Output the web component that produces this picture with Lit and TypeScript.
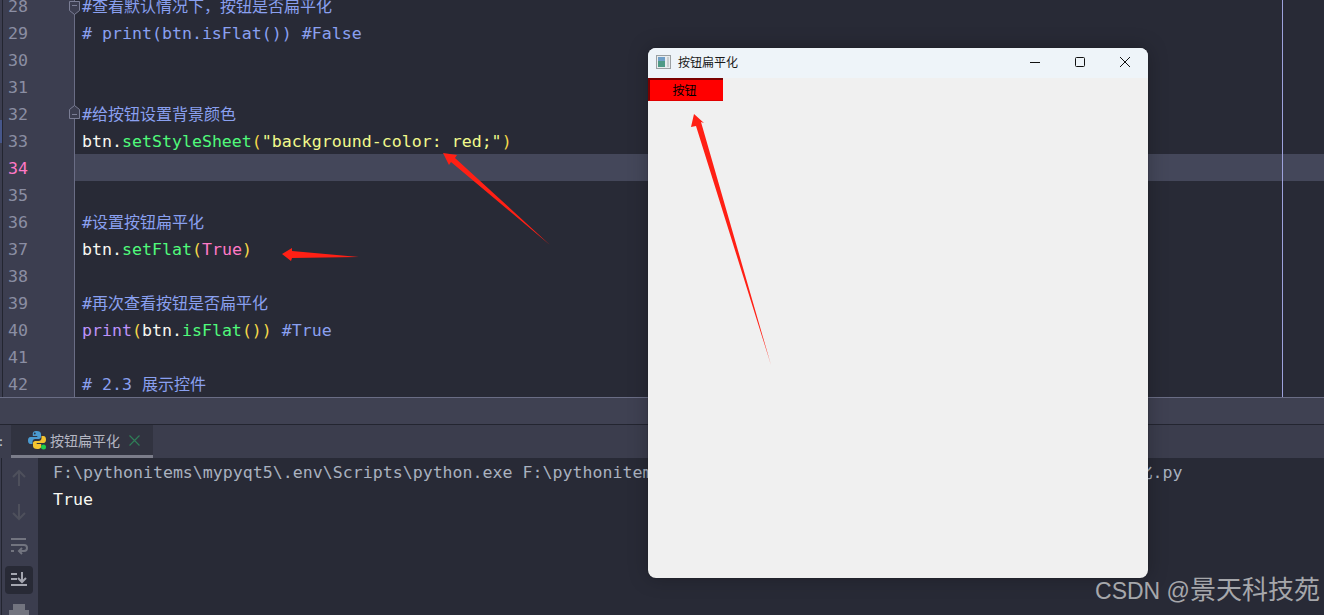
import { LitElement, html, css, svg } from "lit";
import { customElement } from "lit/decorators.js";

type Seg = [string, string];
const c = "cm", w = "wh", g = "gr", y = "ye", s = "st", p = "pk", v = "vi";
const lines: { n: number; segs: Seg[]; fold?: string }[] = [
  { n: 28, fold: "down", segs: [[c, "#"], ["cm cjk", "查看默认情况下，按钮是否扁平化"]] },
  { n: 29, segs: [[c, "# print(btn.isFlat()) #False"]] },
  { n: 30, segs: [] },
  { n: 31, segs: [] },
  { n: 32, fold: "up", segs: [[c, "#"], ["cm cjk", "给按钮设置背景颜色"]] },
  { n: 33, segs: [[w, "btn."], [g, "setStyleSheet"], [y, "("], [s, "\"background-color: red;\""], [y, ")"]] },
  { n: 34, segs: [] },
  { n: 35, segs: [] },
  { n: 36, segs: [[c, "#"], ["cm cjk", "设置按钮扁平化"]] },
  { n: 37, segs: [[w, "btn."], [g, "setFlat"], [y, "("], [p, "True"], [y, ")"]] },
  { n: 38, segs: [] },
  { n: 39, segs: [[c, "#"], ["cm cjk", "再次查看按钮是否扁平化"]] },
  { n: 40, segs: [[v, "print"], [y, "("], [w, "btn."], [g, "isFlat"], [y, "())"], [w, " "], [c, "#True"]] },
  { n: 41, segs: [] },
  { n: 42, segs: [[c, "# 2.3 "], ["cm cjk", "展示控件"]] },
];

@customElement("app-root")
export class AppRoot extends LitElement {
  static styles = css`
    :host { display: block; width: 1324px; height: 615px; position: relative; overflow: hidden; background: #282a36; font-family: "DejaVu Sans Mono", "Liberation Mono", "Noto Sans CJK SC", monospace; }
    .editor { height: 397px; overflow: hidden; display: flex; padding-left: 3px; box-sizing: border-box; background: linear-gradient(90deg, #3c3e50 2px, #232530 2px, #232530 3px, #282a36 3px); position: relative; }
    .stripe { position: absolute; left: 0; top: 120px; width: 2px; height: 23px; background: #46568a; }
    .gutter { width: 72px; flex: none; background: #3c3e50; border-right: 1px solid #6a6d85; box-sizing: border-box; position: relative; z-index: 1; }
    .rows { margin-top: -8px; }
    .num { height: 27px; line-height: 29px; font-size: 16.6px; color: #8b8ea3; padding-left: 5px; position: relative; }
    .num.cur { color: #ff79c6; }
    .fold { position: absolute; left: 66px; top: 5px; width: 11px; height: 14px; }
    .fold.down { top: 9px; transform: scaleY(-1); }
    .code { flex: 1; min-width: 0; position: relative; }
    .line { height: 27px; line-height: 29px; font-size: 16.6px; padding-left: 7px; white-space: pre; overflow: hidden; }
    .line.cur { background: #44475a; line-height: 27px; }
    .margin { position: absolute; left: 1207px; top: 0; bottom: 0; width: 1px; background: #9ea2dc; }
    .cm { color: #8aa0f0; }
    .cjk { font-family: "Noto Sans CJK SC", sans-serif; font-size: 16px; line-height: 1; }
    .wh { color: #f8f8f2; }
    .gr { color: #50fa7b; }
    .ye { color: #f5d94a; }
    .st { color: #f1fa8c; }
    .pk { color: #ff79c6; }
    .vi { color: #bd93f9; }
    .bar { height: 27px; background: #3f4152; border-top: 1px solid #6a6d85; box-sizing: border-box; }
    .tabs { height: 34px; background: #3b3d4d; border-top: 1px solid #232530; box-sizing: border-box; display: flex; }
    .colon { width: 14px; margin-left: -3px; color: #c0c2cc; font-size: 13px; line-height: 34px; flex: none; }
    .tab { width: 142px; background: #313340; border-bottom: 3px solid #7b7d8a; box-sizing: border-box; display: flex; align-items: center; gap: 3px; padding-left: 16px; color: #b4b6c2; font: 14px "Noto Sans CJK SC", sans-serif; }
    .tab svg { flex: none; display: block; }
    .tab .x { margin-left: 6px; }
    .console { height: 157px; display: flex; }
    .tools { width: 38px; flex: none; background: linear-gradient(90deg, #3b3d4e 1px, #232530 1px, #232530 2px, #3b3d4e 2px); box-sizing: border-box; display: flex; flex-direction: column; align-items: center; gap: 6px; padding-top: 6px; overflow: hidden; }
    .tool { width: 28px; height: 28px; flex: none; border-radius: 4px; display: flex; align-items: center; justify-content: center; }
    .tool.on { background: #282a36; }
    .out { flex: 1; padding: 1px 0 0 15px; font-size: 16.6px; line-height: 27px; white-space: pre; overflow: hidden; color: #f8f8f2; }
    .dim { color: #a9b1bf; }
    .gap { display: inline-block; width: 484px; }
    .win { position: absolute; left: 648px; top: 48px; width: 500px; height: 530px; border-radius: 8px; background: #f0f0f0; overflow: hidden; display: flex; flex-direction: column; box-shadow: 0 0 1px #15161d, 0 0 20px rgba(0, 0, 0, 0.25); }
    .title { height: 30px; flex: none; background: #eef4f9; display: flex; align-items: center; padding: 0 1px 2px 8px; box-sizing: border-box; color: #1a1a1a; font: 12px "Noto Sans CJK SC", sans-serif; }
    .title .name { margin: 0 0 2px 7px; flex: 1; }
    .wbtn { width: 45px; height: 28px; display: flex; align-items: center; justify-content: center; }
    .btn { width: 75px; height: 23px; background: #ff0000; border-top: 2px solid #7a0000; border-left: 2px solid #7a0000; border-bottom: 1px solid #e00000; padding-right: 4px; box-sizing: border-box; color: #000; font: 12px "Noto Sans CJK SC", sans-serif; text-align: center; line-height: 20px; }
    .arrows { position: absolute; left: 0; top: 0; pointer-events: none; }
    .mark { position: absolute; right: 4px; top: 574px; font: 23px "Liberation Sans", sans-serif; color: #a6a7ab; white-space: pre; line-height: 34px; }
    .mark span { font: 26px/1 "Noto Sans CJK SC", sans-serif; }
  `;

  private tool(path: unknown, on = false) {
    return html`<div class="tool ${on ? "on" : ""}"><svg width="20" height="20" viewBox="0 0 20 20" fill="none" stroke="#72747f" stroke-width="2">${path}</svg></div>`;
  }

  render() {
    return html`
      <div class="editor">
        <div class="stripe"></div>
        <div class="gutter"><div class="rows">
          ${lines.map((l) => html`<div class="num ${l.n === 34 ? "cur" : ""}">${l.n}${l.fold
            ? html`<svg class="fold ${l.fold}" viewBox="0 0 11 14" fill="#3c3e50" stroke="#7b7e95"><path d="M.5 4.500 5.500.5l5 4v9h-10z"/><path d="M3 9.500h5"/></svg>`
            : ""}</div>`)}
        </div></div>
        <div class="code"><div class="rows">
          ${lines.map((l) => html`<div class="line ${l.n === 34 ? "cur" : ""}">${l.segs.map((x) => html`<span class=${x[0]}>${x[1]}</span>`)}</div>`)}
        </div><div class="margin"></div></div>
      </div>
      <div class="bar"></div>
      <div class="tabs">
        <div class="colon">:</div>
        <div class="tab">
          <svg width="20" height="20" viewBox="0 0 20 20">
            <path fill="#4b9bd1" d="M9.800 1c-3.600 0-4 1.500-4 3v2h4.500v1H3.500C1.800 7 1 8.400 1 10.500S1.800 14 3.500 14h2v-2.200c0-1.500 1.200-2.800 2.800-2.800h3.500c1.300 0 2.200-1 2.200-2.200V4c0-1.800-1.700-3-4.200-3zM7.800 2.600a.9.9 0 1 1 0 1.800.9.9 0 0 1 0-1.800z"/>
            <path fill="#f4c430" d="M10.200 19c3.600 0 4-1.500 4-3v-2H9.700v-1h6.800c1.700 0 2.500-1.400 2.500-3.500S18.200 6 16.500 6h-2v2.200c0 1.500-1.200 2.800-2.800 2.800H8.200C6.900 11 6 12 6 13.200V16c0 1.800 1.700 3 4.200 3z"/>
            <circle cx="16.500" cy="17" r="2.500" fill="#1fd14b"/>
          </svg>
          <span>按钮扁平化</span>
          <svg class="x" width="11" height="11" viewBox="0 0 11 11" stroke="#2f7d57" stroke-width="1.200"><path d="M.5.5l10 10M10.500.5l-10 10"/></svg>
        </div>
      </div>
      <div class="console">
        <div class="tools">
          ${this.tool(svg`<path d="M10 18V3M4 9l6-6 6 6" stroke="#4e505c"/>`)}
          ${this.tool(svg`<path d="M10 2v15M4 11l6 6 6-6" stroke="#4e505c"/>`)}
          ${this.tool(svg`<path d="M2 3h15M2 9h13a3 3 0 0 1 0 6h-4M13 12l-3 3 3 3M2 15h3" />`)}
          ${this.tool(svg`<path d="M2 4h6M2 9h6M2 15h16M13 2v10M9 8l4 4 4-4" stroke="#a4a6b0"/>`, true)}
          ${this.tool(svg`<path d="M5 6V1h10v5M1 7h18v7H1z" fill="#72747f"/>`)}
        </div>
        <div class="out"><span class="dim">F:\\pythonitems\\mypyqt5\\.env\\Scripts\\python.exe F:\\pythonitem<span class="gap"></span><span class="cjk">化</span>.py</span>
True</div>
      </div>
      <div class="win">
        <div class="title">
          <svg width="15" height="14" viewBox="0 0 15 14"><rect x=".5" y=".5" width="14" height="13" fill="#e8ecee" stroke="#9aa0a3"/><rect x="2" y="2" width="7" height="10" fill="#4e9a86"/><rect x="2" y="2" width="7" height="4" fill="#6f9fc8"/><rect x="11" y="2" width="2" height="10" fill="#c9ced0"/></svg>
          <span class="name">按钮扁平化</span>
          <div class="wbtn"><svg width="12" height="12" viewBox="0 0 12 12" stroke="#111"><path d="M1 6.500h10"/></svg></div>
          <div class="wbtn"><svg width="12" height="12" viewBox="0 0 12 12" fill="none" stroke="#111"><rect x="1.500" y="1.500" width="9" height="9" rx="1"/></svg></div>
          <div class="wbtn"><svg width="12" height="12" viewBox="0 0 12 12" stroke="#111"><path d="M1 1l10 10M11 1L1 11"/></svg></div>
        </div>
        <div class="btn">按钮</div>
      </div>
      <svg class="arrows" width="1324" height="615" fill="#ff2015">
        <path d="M443 153l14 2-2 3 95 87-99-83-2 3z"/>
        <path d="M282 254l10-6v3l67 6-67 1-1 3z"/>
        <path d="M694 114l10 9-3-1 70 243-75-239-5 1z"/>
      </svg>
      <div class="mark">CSDN @<span>景天科技苑</span></div>
    `;
  }
}
